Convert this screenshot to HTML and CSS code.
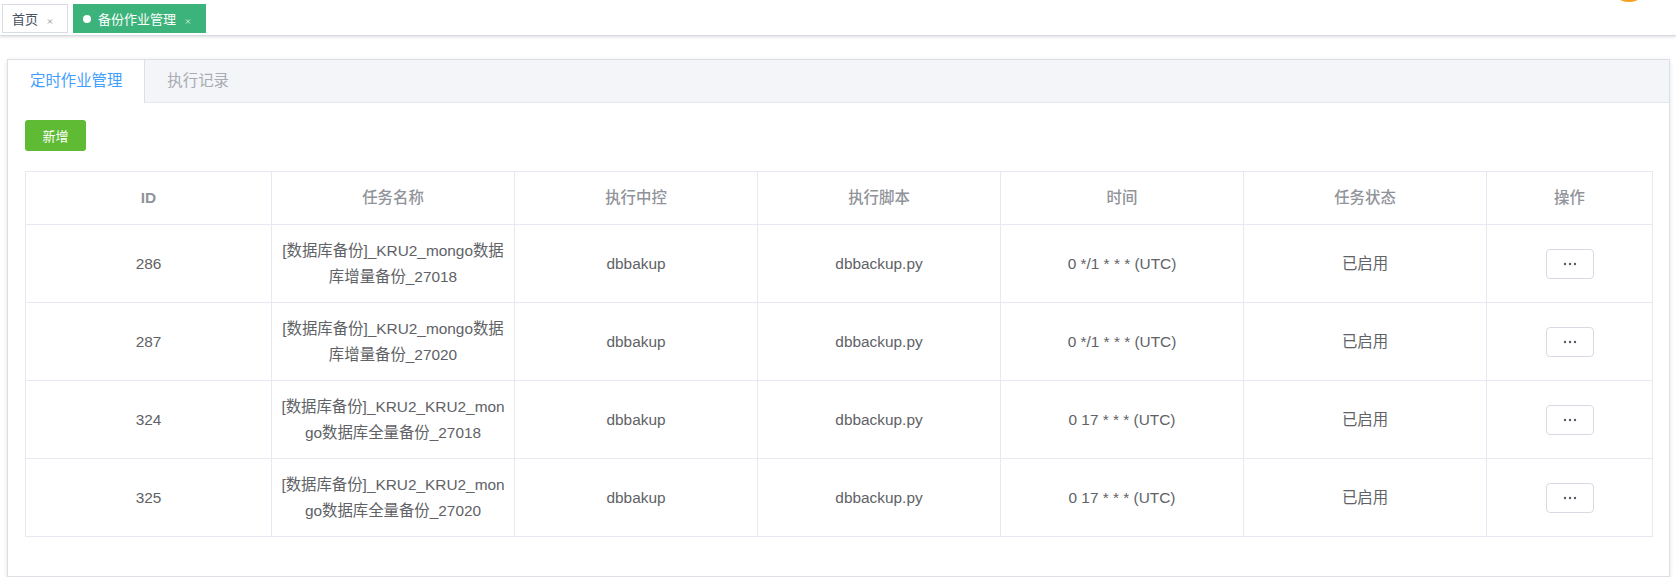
FILE: index.html
```html
<!DOCTYPE html>
<html lang="zh-CN">
<head>
<meta charset="utf-8">
<title>备份作业管理</title>
<link rel="stylesheet" href="styles.css">
</head>
<body>
<div class="tags-bar">
  <div class="tag">
    <span class="tag-text">首页</span>
    <span class="tag-close"><svg width="16" height="16" viewBox="0 0 16 16"><path d="M6 8.5 L10 12.5 M10 8.5 L6 12.5" stroke="#8a8f99" stroke-width="0.9"/></svg></span>
  </div>
  <div class="tag active">
    <span class="tag-dot"></span>
    <span class="tag-text">备份作业管理</span>
    <span class="tag-close"><svg width="16" height="16" viewBox="0 0 16 16"><path d="M6 8.5 L10 12.5 M10 8.5 L6 12.5" stroke="#e6f5ec" stroke-width="0.9"/></svg></span>
  </div>
  <span class="avatar-dot"></span>
</div>

<div class="card">
  <div class="card-tabs">
    <div class="card-tab active">定时作业管理</div>
    <div class="card-tab">执行记录</div>
  </div>
  <div class="card-body">
    <button class="btn-add">新增</button>
    <table class="grid">
      <colgroup>
        <col class="c-id"><col class="c-std"><col class="c-std"><col class="c-std"><col class="c-std"><col class="c-std"><col class="c-op">
      </colgroup>
      <thead>
        <tr><th class="th-latin">ID</th><th>任务名称</th><th>执行中控</th><th>执行脚本</th><th>时间</th><th>任务状态</th><th>操作</th></tr>
      </thead>
      <tbody>
        <tr>
          <td>286</td><td>[数据库备份]_KRU2_mongo数据库增量备份_27018</td><td>dbbakup</td><td>dbbackup.py</td><td>0 */1 * * * (UTC)</td><td>已启用</td>
          <td><button class="btn-more"><svg width="14" height="4" viewBox="0 0 14 4"><circle cx="2" cy="2" r="1.2"/><circle cx="7" cy="2" r="1.2"/><circle cx="12" cy="2" r="1.2"/></svg></button></td>
        </tr>
        <tr>
          <td>287</td><td>[数据库备份]_KRU2_mongo数据库增量备份_27020</td><td>dbbakup</td><td>dbbackup.py</td><td>0 */1 * * * (UTC)</td><td>已启用</td>
          <td><button class="btn-more"><svg width="14" height="4" viewBox="0 0 14 4"><circle cx="2" cy="2" r="1.2"/><circle cx="7" cy="2" r="1.2"/><circle cx="12" cy="2" r="1.2"/></svg></button></td>
        </tr>
        <tr>
          <td>324</td><td>[数据库备份]_KRU2_KRU2_mongo数据库全量备份_27018</td><td>dbbakup</td><td>dbbackup.py</td><td>0 17 * * * (UTC)</td><td>已启用</td>
          <td><button class="btn-more"><svg width="14" height="4" viewBox="0 0 14 4"><circle cx="2" cy="2" r="1.2"/><circle cx="7" cy="2" r="1.2"/><circle cx="12" cy="2" r="1.2"/></svg></button></td>
        </tr>
        <tr>
          <td>325</td><td>[数据库备份]_KRU2_KRU2_mongo数据库全量备份_27020</td><td>dbbakup</td><td>dbbackup.py</td><td>0 17 * * * (UTC)</td><td>已启用</td>
          <td><button class="btn-more"><svg width="14" height="4" viewBox="0 0 14 4"><circle cx="2" cy="2" r="1.2"/><circle cx="7" cy="2" r="1.2"/><circle cx="12" cy="2" r="1.2"/></svg></button></td>
        </tr>
      </tbody>
    </table>
  </div>
</div>
</body>
</html>
```

FILE: styles.css
```css
* { box-sizing: border-box; }

html, body {
  margin: 0;
  padding: 0;
  background: #ffffff;
  font-family: "Liberation Sans", "Noto Sans CJK SC", sans-serif;
  overflow: hidden;
}

.tags-bar {
  position: relative;
  height: 36px;
  padding: 4px 0 0 2px;
  display: flex;
  gap: 5px;
  align-items: flex-start;
  background: #fff;
  border-bottom: 1px solid #d8dce5;
  box-shadow: 0 1px 3px 0 rgba(0, 0, 0, 0.12), 0 0 3px 0 rgba(0, 0, 0, 0.04);
}

.tag {
  height: 29px;
  display: flex;
  align-items: center;
  padding: 0 9px;
  border: 1px solid #d8dce5;
  background: #fff;
  color: #495060;
  font-size: 13px;
}

.tag.active {
  background: #3cb37a;
  border-color: #3cb37a;
  color: #fff;
}

.tag-dot {
  width: 8px;
  height: 8px;
  border-radius: 50%;
  background: #fff;
  margin-right: 7px;
}

.tag-close {
  width: 16px;
  height: 16px;
  margin-left: 4px;
  display: flex;
}

.avatar-dot {
  position: absolute;
  top: -38px;
  right: 27px;
  width: 40px;
  height: 40px;
  border-radius: 50%;
  background: #f5a01e;
}

.card {
  margin: 23px 6px 0 7px;
  border: 1px solid #dcdfe6;
  background: #fff;
  box-shadow: 0 2px 4px 0 rgba(0, 0, 0, 0.08), 0 0 6px 0 rgba(0, 0, 0, 0.04);
}

.card-tabs {
  display: flex;
  height: 43px;
  background: #f3f5f8;
  border-bottom: 1px solid #e4e7ed;
}

.card-tab {
  height: 42px;
  line-height: 42px;
  padding: 0 22px;
  font-size: 15.4px;
  color: #a8abb2;
}

.card-tab.active {
  background: #fff;
  color: #409eff;
  border-right: 1px solid #dcdfe6;
  height: 43px;
  margin-bottom: -1px;
}

.card-body {
  padding: 17px 17px 17px 17px;
}

.btn-add {
  display: block;
  width: 61px;
  height: 31px;
  border: none;
  border-radius: 3px;
  background: #5fba34;
  color: #fff;
  font-family: inherit;
  font-size: 13px;
  padding: 0;
  margin: 0 0 20px 0;
}

.grid {
  width: 1627px;
  table-layout: fixed;
  border-collapse: collapse;
  margin-bottom: 22px;
}

.c-id { width: 246px; }
.c-std { width: 243px; }
.c-op { width: 166px; }

.grid th,
.grid td {
  border: 1px solid #e6e9f2;
  text-align: center;
  vertical-align: middle;
  font-size: 15.4px;
  word-break: break-all;
  padding: 13px 7px;
}

.grid th {
  color: #909399;
  font-weight: 500;
  line-height: 26px;
}

.grid th.th-latin {
  font-weight: 700;
}

.grid td {
  color: #606266;
  line-height: 25.5px;
}

.btn-more {
  width: 48px;
  height: 30px;
  padding: 0;
  border: 1px solid #d9d9e6;
  border-radius: 4px;
  background: #fff;
  display: inline-flex;
  align-items: center;
  justify-content: center;
  vertical-align: middle;
  fill: #555a64;
}
```
